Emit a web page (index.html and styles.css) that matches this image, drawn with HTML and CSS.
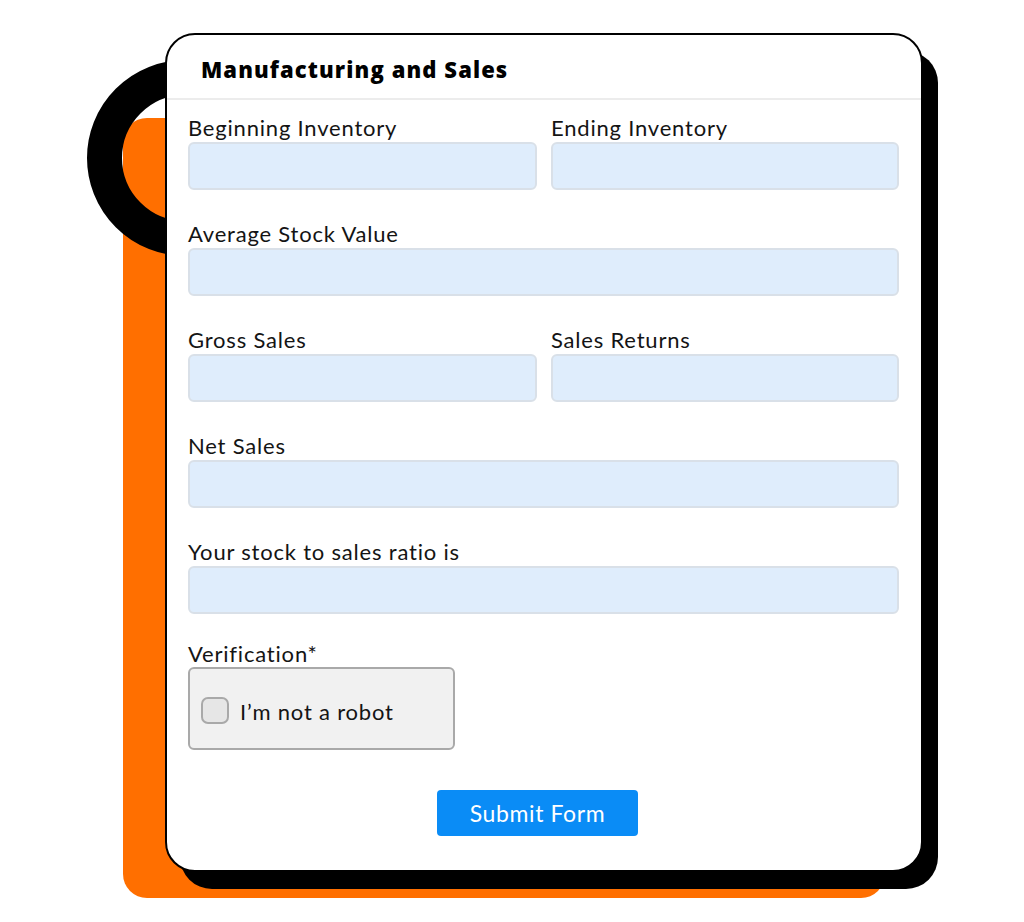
FILE: index.html
```html
<!DOCTYPE html>
<html>
<head>
  <title>Manufacturing and Sales</title>
  <link rel="stylesheet" href="styles.css">
</head>
<body>
  <div class="stage">
    <div class="ring"></div>
    <div class="orange"></div>
    <div class="shadow"></div>

    <div class="card">
      <h1 class="heading">Manufacturing and Sales</h1>
      <form class="form">
        <div class="row">
          <div class="field">
            <label>Beginning Inventory</label>
            <input type="text">
          </div>
          <div class="field">
            <label>Ending Inventory</label>
            <input type="text">
          </div>
        </div>
        <div class="field">
          <label>Average Stock Value</label>
          <input type="text">
        </div>
        <div class="row">
          <div class="field">
            <label>Gross Sales</label>
            <input type="text">
          </div>
          <div class="field">
            <label>Sales Returns</label>
            <input type="text">
          </div>
        </div>
        <div class="field">
          <label>Net Sales</label>
          <input type="text">
        </div>
        <div class="field">
          <label>Your stock to sales ratio is</label>
          <input type="text">
        </div>
        <div class="field verify">
          <label>Verification*</label>
          <div class="captcha">
            <span class="checkbox"></span>
            <span class="captcha-text">I’m not a robot</span>
          </div>
        </div>
        <div class="actions">
          <button type="button" class="submit">Submit Form</button>
        </div>
      </form>
    </div>
  </div>
</body>
</html>
```

FILE: styles.css
```css
body {
  margin: 0;
  background: #fff;
  font-family: Lato, "Noto Sans", sans-serif;
  color: #141414;
}

.stage {
  position: relative;
  width: 1024px;
  height: 922px;
  overflow: hidden;
  padding: 33px 0 0 165px;
  box-sizing: border-box;
}

/* decoration behind the card */
.ring {
  position: absolute;
  left: 87px;
  top: 60px;
  width: 196px;
  height: 196px;
  border: 35px solid #000;
  border-radius: 50%;
  box-sizing: border-box;
  z-index: 2;
}

.orange {
  position: absolute;
  left: 123px;
  top: 118px;
  width: 762px;
  height: 780px;
  background: #ff6f00;
  border-radius: 24px;
  z-index: 1;
}

.shadow {
  position: absolute;
  left: 180px;
  top: 51px;
  width: 758px;
  height: 838px;
  background: #000;
  border-radius: 32px;
  z-index: 3;
}

.card {
  position: relative;
  z-index: 4;
  width: 758px;
  height: 839px;
  box-sizing: border-box;
  background: #fff;
  border: 2px solid #000;
  border-radius: 30px;
}

.heading {
  margin: 0;
  height: 65px;
  padding: 21px 0 0 34px;
  box-sizing: border-box;
  font-family: "Open Sans", sans-serif;
  font-weight: 800;
  font-size: 22px;
  letter-spacing: 1.1px;
  line-height: 26px;
  color: #000;
  border-bottom: 2px solid #ececec;
}

.form {
  padding: 15px 22px 0 21px;
}

.row {
  display: grid;
  grid-template-columns: 349px 348px;
  gap: 14px;
}

.field {
  margin-bottom: 31px;
}

.field label {
  display: block;
  font-size: 22px;
  letter-spacing: 0.8px;
  line-height: 25px;
  margin-bottom: 2px;
  color: #141414;
}

.field input {
  display: block;
  width: 100%;
  height: 48px;
  box-sizing: border-box;
  background: #dfedfc;
  border: 2px solid #d9e0e8;
  border-radius: 6px;
}

.verify {
  margin-top: -4px;
  margin-bottom: 0;
}

.verify label {
  margin-bottom: 1px;
}

.captcha {
  width: 267px;
  height: 83px;
  box-sizing: border-box;
  background: #f1f1f1;
  border: 2px solid #a9a9a9;
  border-radius: 6px;
  display: flex;
  align-items: center;
  padding-left: 11px;
  gap: 11px;
}

.checkbox {
  width: 28px;
  height: 27px;
  box-sizing: border-box;
  background: #e6e6e6;
  border: 2px solid #a9a9a9;
  border-radius: 7px;
  margin-top: 3px;
}

.captcha-text {
  font-size: 22px;
  letter-spacing: 0.8px;
  margin-top: 6px;
}

.actions {
  display: flex;
  justify-content: center;
  padding-top: 40px;
  padding-right: 12px;
}

.submit {
  width: 201px;
  height: 46px;
  background: #0a8cf6;
  color: #fff;
  border: none;
  border-radius: 4px;
  font-family: Lato, sans-serif;
  font-size: 23px;
  letter-spacing: 0.6px;
  font-weight: 400;
}
```
